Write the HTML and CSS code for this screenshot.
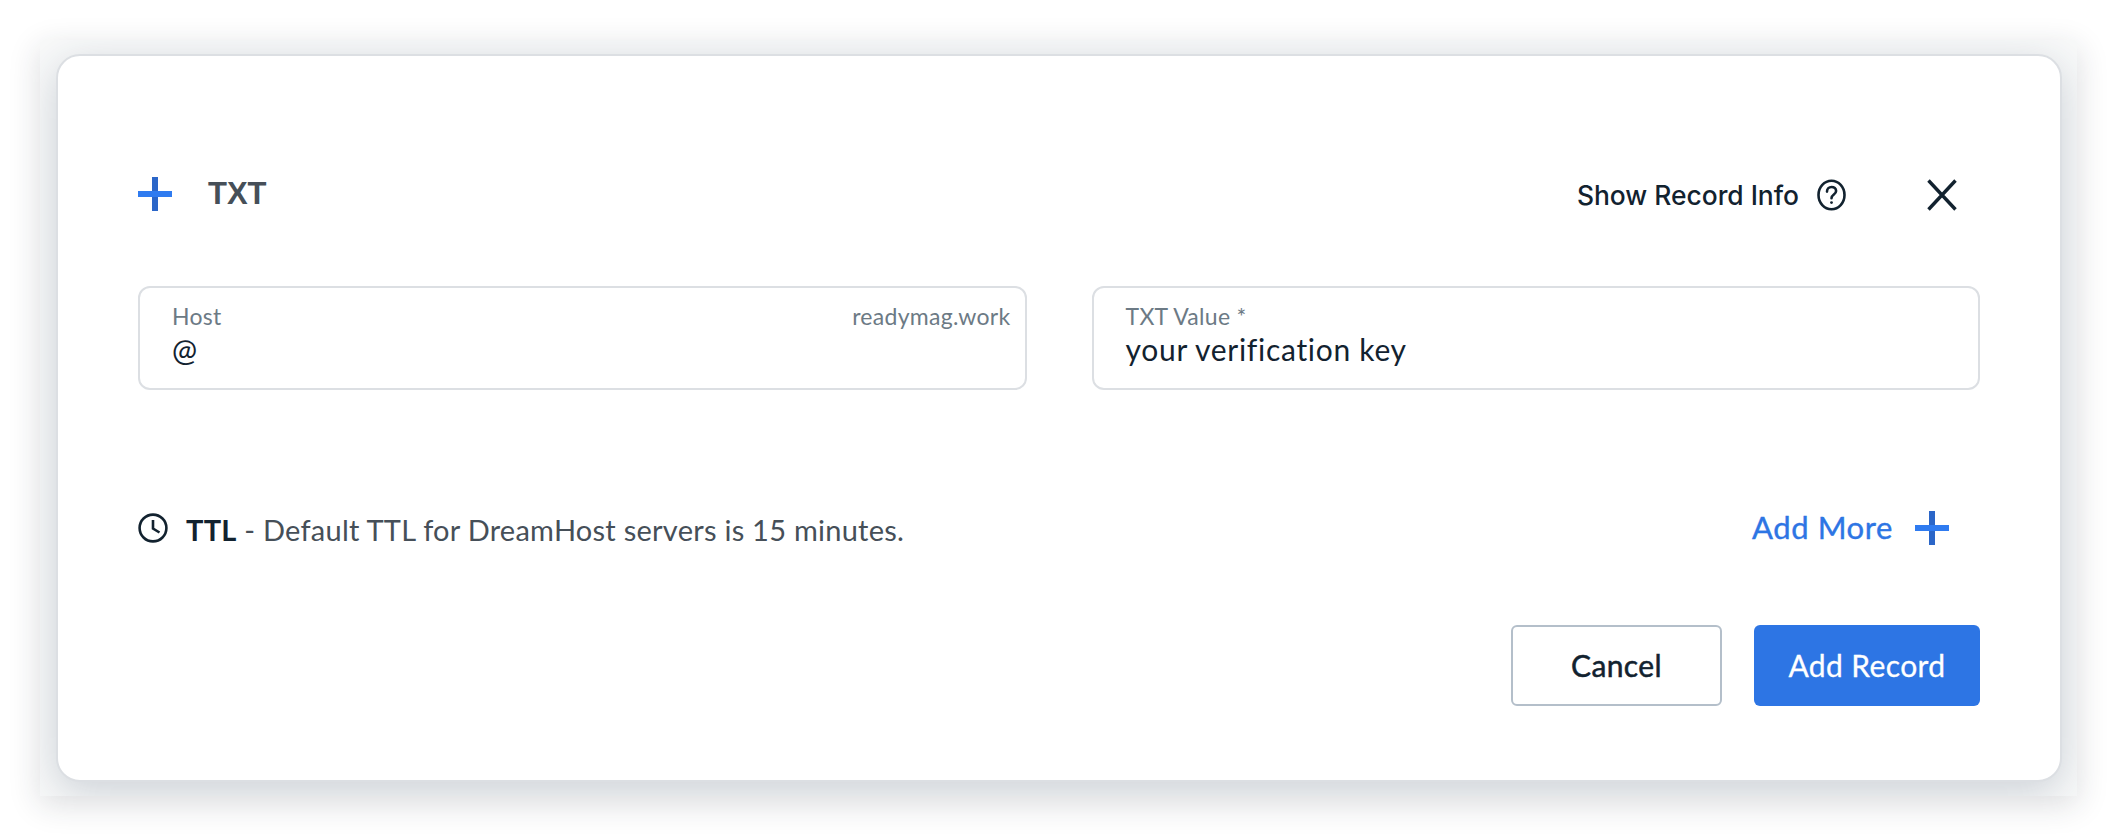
FILE: index.html
```html
<!DOCTYPE html>
<html lang="en">
<head>
  <meta charset="UTF-8">
  <title>Add TXT Record</title>
  <link rel="stylesheet" href="styles.css">
</head>
<body>

  <div class="frame">
    <div class="card">

      <div class="header">
        <div class="title">
          <svg class="plus" width="34" height="34" viewBox="0 0 34 34">
            <rect x="14" y="0" width="6" height="34" fill="#2b66c8"/>
            <rect x="0" y="14" width="34" height="6" fill="#2f7bf0"/>
          </svg>
          <span>TXT</span>
        </div>
        <div class="header-actions">
          <span class="info-link">Show Record Info</span>
          <svg class="help" width="29" height="32" viewBox="0 0 29 32" fill="none" stroke="#12222f" stroke-width="2.6">
            <ellipse cx="14.5" cy="16" rx="13" ry="14.2"/>
            <path d="M10 12.6c0-3 2.1-4.6 4.6-4.6s4.5 1.6 4.5 4c0 3.6-4.6 3.4-4.6 7.2" stroke-linecap="round"/>
            <circle cx="14.5" cy="23.6" r="1.4" fill="#12222f" stroke="none"/>
          </svg>
          <svg class="close" width="30" height="32" viewBox="0 0 30 32" fill="none" stroke="#12222f" stroke-width="3.4">
            <path d="M1.5 1.5l27 29M28.5 1.5l-27 29"/>
          </svg>
        </div>
      </div>

      <div class="fields">
        <div class="field">
          <div class="field-top">
            <label>Host</label>
            <span class="domain">readymag.work</span>
          </div>
          <div class="value">@</div>
        </div>
        <div class="field">
          <div class="field-top">
            <label>TXT Value *</label>
          </div>
          <div class="value">your verification key</div>
        </div>
      </div>

      <div class="notes">
        <div class="ttl">
          <svg class="clock" width="30" height="30" viewBox="0 0 30 30" fill="none" stroke="#12222f" stroke-width="2.6">
            <circle cx="15" cy="15" r="13.4"/>
            <path d="M15 7v8.5l6.5 4"/>
          </svg>
          <p><strong>TTL</strong> - Default TTL for DreamHost servers is 15 minutes.</p>
        </div>
        <div class="add-more">
          <span>Add More</span>
          <svg width="34" height="34" viewBox="0 0 34 34">
            <rect x="14" y="0" width="6" height="34" fill="#2b66c8"/>
            <rect x="0" y="14" width="34" height="6" fill="#2f7bf0"/>
          </svg>
        </div>
      </div>

      <div class="actions">
        <button class="btn btn-cancel">Cancel</button>
        <button class="btn btn-primary">Add Record</button>
      </div>

    </div>
  </div>

</body>
</html>
```

FILE: styles.css
```css
html, body {
  margin: 0;
  padding: 0;
  height: 100%;
  background: #fff;
  font-family: 'Lato', sans-serif;
  overflow: hidden;
}

body {
  padding: 40px 39px 40px 40px;
  box-sizing: border-box;
}

.frame {
  height: 756px;
  box-sizing: border-box;
  padding: 14px 15px 14px 16px;
  background: #f8f9f9;
  overflow: hidden;
  box-shadow: 0 8px 30px rgba(30, 40, 50, 0.16);
}

.card {
  height: 728px;
  box-sizing: border-box;
  padding: 118px 80px 0;
  background: #fff;
  border: 2px solid #dcdfe3;
  border-radius: 24px;
  box-shadow: 0 10px 40px rgba(30, 50, 80, 0.2);
}

.header {
  display: flex;
  justify-content: space-between;
  align-items: center;
  height: 40px;
}

.title {
  display: flex;
  align-items: center;
  gap: 36px;
  font-family: 'Liberation Sans', sans-serif;
  font-size: 31px;
  font-weight: bold;
  color: #464f58;
}

.header-actions {
  display: flex;
  align-items: center;
  margin-right: 23px;
  color: #12222f;
}

.info-link {
  margin-top: 2px;
  font-family: 'Inter', sans-serif;
  font-size: 26.4px;
  font-weight: 500;
}

.help {
  margin-left: 18px;
  margin-top: 1px;
}

.close {
  margin-left: 81px;
  margin-top: 1px;
}

.fields {
  display: flex;
  gap: 65px;
  margin-top: 72px;
}

.field {
  flex: 1;
  height: 104px;
  box-sizing: border-box;
  padding: 14px 14px 0 32px;
  border: 2px solid #dcdfe3;
  border-radius: 12px;
}

.field-top {
  display: flex;
  justify-content: space-between;
  font-size: 23px;
  letter-spacing: 0.3px;
  line-height: 28px;
  color: #6c7a85;
}

.value {
  margin-top: 1px;
  font-size: 30px;
  letter-spacing: 0.7px;
  line-height: 36px;
  color: #12222f;
}

.notes {
  display: flex;
  justify-content: space-between;
  align-items: center;
  height: 40px;
  margin-top: 118px;
}

.ttl {
  display: flex;
  align-items: center;
  gap: 18px;
  font-size: 29px;
  letter-spacing: 0.25px;
  color: #464f58;
}

.ttl p {
  margin: 2px 0 0;
}

.ttl strong {
  color: #12222f;
}

.add-more {
  display: flex;
  align-items: center;
  gap: 22px;
  margin-right: 31px;
  font-size: 31px;
  letter-spacing: 0.6px;
  -webkit-text-stroke: 0.4px #2d75e4;
  color: #2d75e4;
}

.add-more span {
  margin-top: -3px;
}

.actions {
  display: flex;
  justify-content: flex-end;
  gap: 32px;
  margin-top: 77px;
}

.btn {
  height: 81px;
  padding: 0 0 2px;
  border-radius: 6px;
  font-family: 'Lato', sans-serif;
  font-size: 30px;
  letter-spacing: 0.4px;
}

.btn-cancel {
  width: 211px;
  background: #fff;
  border: 2px solid #b4bfca;
  color: #12222f;
  -webkit-text-stroke: 0.5px #12222f;
}

.btn-primary {
  width: 226px;
  background: #2d75e4;
  border: none;
  color: #fff;
  -webkit-text-stroke: 0.3px #fff;
}
```
